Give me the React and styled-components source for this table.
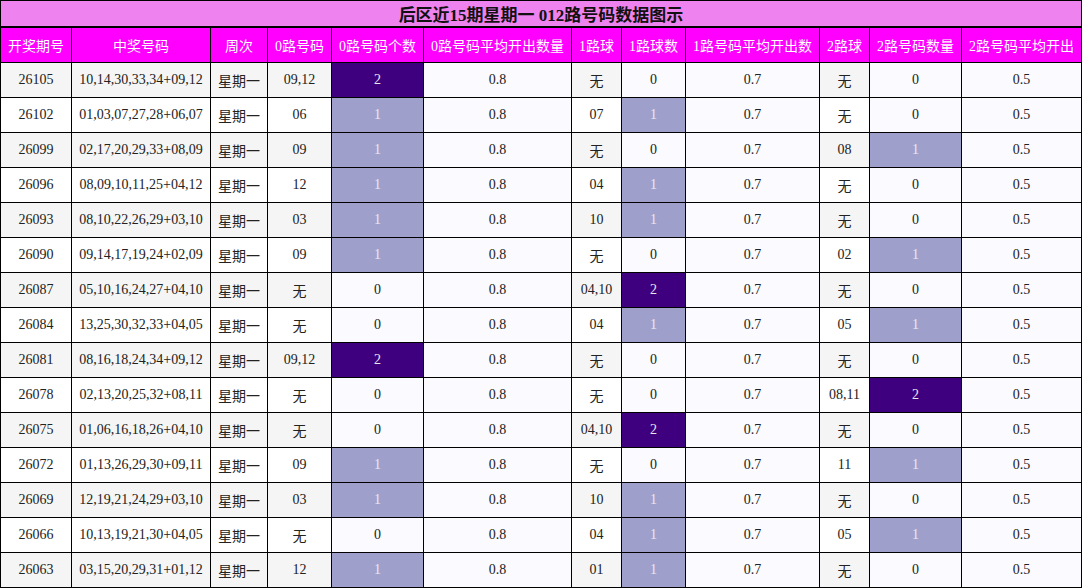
import React from 'react'
import styled, { createGlobalStyle } from 'styled-components';

const GlobalStyle = createGlobalStyle`
    body{
        margin:0;
        background:#fff;
        font-family:"Liberation Serif", "Noto Sans CJK SC", serif;
    }
`;

const COLS = '71px 139px 57px 64px 92px 148px 50px 64px 134px 50px 92px 120px';

const heads = ['开奖期号', '中奖号码', '周次', '0路号码', '0路号码个数', '0路号码平均开出数量', '1路球', '1路球数', '1路号码平均开出数', '2路球', '2路号码数量', '2路号码平均开出'];

const rows = [
    ['26105', '10,14,30,33,34+09,12', '09,12', 2, '无', 0, '无', 0],
    ['26102', '01,03,07,27,28+06,07', '06', 1, '07', 1, '无', 0],
    ['26099', '02,17,20,29,33+08,09', '09', 1, '无', 0, '08', 1],
    ['26096', '08,09,10,11,25+04,12', '12', 1, '04', 1, '无', 0],
    ['26093', '08,10,22,26,29+03,10', '03', 1, '10', 1, '无', 0],
    ['26090', '09,14,17,19,24+02,09', '09', 1, '无', 0, '02', 1],
    ['26087', '05,10,16,24,27+04,10', '无', 0, '04,10', 2, '无', 0],
    ['26084', '13,25,30,32,33+04,05', '无', 0, '04', 1, '05', 1],
    ['26081', '08,16,18,24,34+09,12', '09,12', 2, '无', 0, '无', 0],
    ['26078', '02,13,20,25,32+08,11', '无', 0, '无', 0, '08,11', 2],
    ['26075', '01,06,16,18,26+04,10', '无', 0, '04,10', 2, '无', 0],
    ['26072', '01,13,26,29,30+09,11', '09', 1, '无', 0, '11', 1],
    ['26069', '12,19,21,24,29+03,10', '03', 1, '10', 1, '无', 0],
    ['26066', '10,13,19,21,30+04,05', '无', 0, '04', 1, '05', 1],
    ['26063', '03,15,20,29,31+01,12', '12', 1, '01', 1, '无', 0],
];

const App = () => {
    return (
        <>
            <GlobalStyle />
            <Board>
                <Title>后区近15期星期一 012路号码数据图示</Title>
                {heads.map(h => <Head key={h}>{h}</Head>)}
                {rows.map((r, i) => {
                    const odd = i % 2 === 0;
                    const [issue, nums, z, zc, o, oc, t, tc] = r;
                    return (
                        <React.Fragment key={issue}>
                            <Cell $odd={odd}>{issue}</Cell>
                            <Cell $odd={odd}>{nums}</Cell>
                            <Cell $odd={odd}>星期一</Cell>
                            <Cell $odd={odd}>{z}</Cell>
                            <Count $n={zc}>{zc}</Count>
                            <Avg>0.8</Avg>
                            <Cell $odd={odd}>{o}</Cell>
                            <Count $n={oc}>{oc}</Count>
                            <Avg>0.7</Avg>
                            <Cell $odd={odd}>{t}</Cell>
                            <Count $n={tc}>{tc}</Count>
                            <Avg>0.5</Avg>
                        </React.Fragment>
                    )
                })}
            </Board>
        </>
    )
}

export default App

const Board = styled.div`
    display:grid;
    grid-template-columns:${COLS};
    grid-template-rows:27px;
    grid-auto-rows:35px;
    width:1081px;
    border-left:1px solid #000;
    border-top:1px solid #000;
`;
const Base = styled.div`
    box-sizing:border-box;
    display:flex;
    align-items:center;
    justify-content:center;
    border-right:1px solid #000;
    border-bottom:1px solid #000;
    white-space:nowrap;
    overflow:hidden;
`;
const Title = styled(Base)`
    grid-column:1 / -1;
    border-bottom-width:2px;
    background:#ee82ee;
    color:#111;
    font-size:17px;
    font-weight:bold;
`;
const Head = styled(Base)`
    background:#ff00ff;
    color:#fff;
    font-size:14px;
`;
const Cell = styled(Base)`
    background:${p => p.$odd ? '#f5f5f5' : '#fff'};
    color:#222;
    font-size:14px;
`;
const Count = styled(Base)`
    background:${p => p.$n === 2 ? '#3f007f' : p.$n === 1 ? '#9f9fcb' : '#fafaff'};
    color:${p => p.$n ? '#e8e8f0' : '#222'};
    font-size:14px;
`;
const Avg = styled(Base)`
    background:#fafaff;
    color:#222;
    font-size:14px;
`;
